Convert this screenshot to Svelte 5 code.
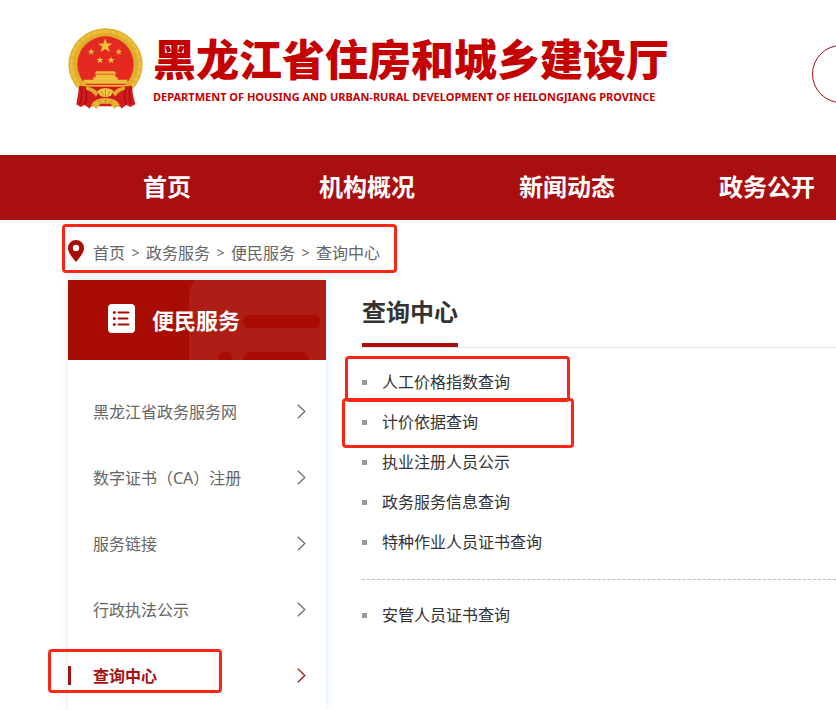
<script lang="ts">
	const navItems = ['首页', '机构概况', '新闻动态', '政务公开'];

	const crumbs = ['首页', '政务服务', '便民服务', '查询中心'];

	const sideItems = [
		{ id: 'portal', label: '黑龙江省政务服务网' },
		{ id: 'ca', label: '数字证书（CA）注册' },
		{ id: 'links', label: '服务链接' },
		{ id: 'law', label: '行政执法公示' },
		{ id: 'query', label: '查询中心' }
	];

	const groups = [
		[
			{ label: '人工价格指数查询', mark: 'mark-index' },
			{ label: '计价依据查询', mark: 'mark-basis' },
			{ label: '执业注册人员公示', mark: '' },
			{ label: '政务服务信息查询', mark: '' },
			{ label: '特种作业人员证书查询', mark: '' }
		],
		[{ label: '安管人员证书查询', mark: '' }]
	];

	let active = $state('query');
	let keyword = $state('');
</script>

{#snippet star(x: number, y: number, size: number)}
	<path
		transform="translate({x} {y}) scale({size})"
		d="M0-10 2.4-3.2 9.5-3.1 3.8 1.2 5.9 8.1 0 4-5.9 8.1-3.8 1.2-9.5-3.1-2.4-3.2Z"
	/>
{/snippet}

<div class="page">
	<!-- Header -->
	<header class="header">
		<a href="/" class="brand">
			<svg class="emblem" viewBox="54 38 226 244" aria-hidden="true">
				<ellipse cx="167" cy="148" rx="112" ry="109" fill="#e3b02c" />
				<ellipse cx="167" cy="148" rx="103" ry="100" fill="none" stroke="#ebc142" stroke-width="8" stroke-dasharray="14 5" />
				<ellipse cx="167" cy="148" rx="91" ry="89" fill="none" stroke="#dda92a" stroke-width="5" stroke-dasharray="5 7" />
				<circle cx="167" cy="148" r="85" fill="#e42a20" />
				<g fill="#efc03d">
					{@render star(166, 92, 2.3)}
					{@render star(124, 110, 1.1)}
					{@render star(207, 110, 1.1)}
					{@render star(150, 135, 1.1)}
					{@render star(184, 135, 1.1)}
					<path d="M140 168h54l6 8h-66zM137 178h60v10h-60zM130 186h74v8h-74zM101 194h132v12H101zM94 210h146v4H94z" />
				</g>
				<path d="M104 216H230L222 274H112Z" fill="#cf1b1c" />
				<path d="M88 211 112 214 134 236 120 281 104 270 92 276 79 268 84 240Z" fill="#d31b1e" />
				<path d="M246 211 222 214 200 236 214 281 230 270 242 276 257 268 250 240Z" fill="#d31b1e" />
				<path d="M92 216q8 26-3 52M106 218q8 26-1 50M242 216q-8 26 3 52M228 218q-8 26 1 50" fill="none" stroke="#a20e14" stroke-width="4" />
				<path d="M142 228Q167 210 192 228L182 243Q167 249 152 243Z" fill="#f2c945" />
				<path d="M108 214q24 2 38 20l-8 10q-14-18-30-20zM226 214q-24 2-38 20l8 10q14-18 30-20z" fill="#e0aa2b" />
				<path d="M124 270Q134 249 167 249T210 270L194 281 182 266H152L140 281Z" fill="#e5b32f" />
				<path d="M153 228l8 14M167 222v22M181 228l-8 14M145 254l8 10M167 251v14M189 254l-8 10" stroke="#c78b1b" stroke-width="3" />
			</svg>
			<span class="brand-text">
				<span class="brand-name">黑龙江省住房和城乡建设厅</span>
				<span class="brand-sub">DEPARTMENT OF HOUSING AND URBAN-RURAL DEVELOPMENT OF HEILONGJIANG PROVINCE</span>
			</span>
		</a>
		<input class="search" type="search" aria-label="搜索" bind:value={keyword} />
	</header>

	<nav class="nav">
		{#each navItems as item}
			<a href="/">{item}</a>
		{/each}
	</nav>

	<!-- Breadcrumb -->
	<div class="crumbs">
		<svg class="pin" viewBox="0 0 16 22" aria-hidden="true">
			<path fill="#a90c02" fill-rule="evenodd" d="M8 0a8 8 0 0 1 8 8c0 4.500-4 9-8 14C4 17 0 12.500 0 8a8 8 0 0 1 8-8Zm0 4.800a3.200 3.200 0 1 0 0 6.400 3.200 3.200 0 0 0 0-6.400Z" />
		</svg>
		{#each crumbs as crumb, i}
			{#if i > 0}
				<span class="sep">&gt;</span>
			{/if}
			<a href="/">{crumb}</a>
		{/each}
		<span class="mark mark-crumbs"></span>
	</div>

	<div class="body">
		<!-- Sidebar -->
		<aside class="sidebar">
			<div class="sidebar-head">
				<svg class="head-bg" viewBox="0 0 137 80" aria-hidden="true">
					<rect y="-8" width="170" height="130" rx="24" fill="#af1d17" />
					<g fill="#a90c02">
						<rect x="54" y="35" width="77" height="13" rx="6" />
						<rect x="54" y="72" width="66" height="14" rx="7" />
						<circle cx="36" cy="79" r="7" />
					</g>
				</svg>
				<svg class="head-icon" viewBox="0 0 27 29" aria-hidden="true">
					<rect width="27" height="29" rx="4" fill="#fff" />
					<path d="M10.500 8.500h10M10.500 14.500h9M10.500 20.500h10" stroke="#a90c02" stroke-width="2" stroke-linecap="round" />
					<g fill="#a90c02">
						<circle cx="6.300" cy="8.500" r="1.500" />
						<circle cx="6.300" cy="14.500" r="1.500" />
						<circle cx="6.300" cy="20.500" r="1.500" />
					</g>
				</svg>
				<h2>便民服务</h2>
			</div>
			<div class="side-list">
				{#each sideItems as item}
					<a
						href="#{item.id}"
						class="side-item"
						class:active={active === item.id}
						onclick={() => (active = item.id)}
					>
						<span>{item.label}</span>
						<svg class="arrow" viewBox="0 0 9 15" aria-hidden="true">
							<path d="M.8.8 7.800 7.500.8 14.200" fill="none" stroke="currentColor" stroke-width="1.200" />
						</svg>
						{#if item.id === 'query'}
							<span class="mark mark-side"></span>
						{/if}
					</a>
				{/each}
			</div>
		</aside>

		<!-- Content -->
		<main class="content">
			<div class="title-bar">
				<h1>查询中心</h1>
			</div>
			{#each groups as group}
				<ul class="list">
					{#each group as row}
						<li>
							<a href="/">{row.label}</a>
							{#if row.mark}
								<span class="mark {row.mark}"></span>
							{/if}
						</li>
					{/each}
				</ul>
			{/each}
		</main>
	</div>
</div>

<style>
	:global(body) {
		background: #fff;
	}

	.page {
		min-height: 100vh;
		display: flex;
		flex-direction: column;
		overflow: hidden;
		font-family: 'Noto Sans', 'Noto Sans CJK SC', sans-serif;
		font-size: 16px;
		color: #333;
	}

	a {
		color: inherit;
		text-decoration: none;
	}

	h1,
	h2 {
		margin: 0;
		font-size: 24px;
		font-weight: 700;
	}

	/* Header */
	.header {
		display: flex;
		align-items: flex-start;
		gap: 144px;
		padding: 28px 0 45px 68px;
	}

	.brand {
		display: flex;
		flex: none;
		gap: 10px;
		color: #c40000;
	}

	.emblem {
		width: 75px;
		height: 81px;
	}

	.brand-text {
		display: flex;
		flex-direction: column;
		width: 515px;
		padding-top: 8px;
		white-space: nowrap;
	}

	.brand-name {
		font-size: 43px;
		line-height: 48px;
		font-weight: 900;
	}

	.brand-sub {
		font-size: 11px;
		line-height: 26px;
		font-weight: 700;
	}

	.search {
		flex: 1 0 320px;
		box-sizing: border-box;
		height: 58px;
		margin: 17px 0 0;
		padding: 0 28px;
		border: 1px solid #a90f0f;
		border-radius: 29px;
		background: #fff;
		font: inherit;
		outline: none;
		appearance: none;
	}

	/* Nav */
	.nav {
		display: flex;
		padding-left: 67px;
		background: #a90f0f;
	}

	.nav a {
		flex: none;
		width: 200px;
		padding-bottom: 2px;
		line-height: 63px;
		text-align: center;
		font-size: 24px;
		font-weight: 700;
		color: #fff;
	}

	/* Breadcrumb */
	.crumbs {
		position: relative;
		align-self: flex-start;
		display: flex;
		align-items: center;
		height: 60px;
		margin-left: 68px;
		color: #666;
	}

	.crumbs a {
		line-height: 24px;
		padding-top: 5px;
	}

	.pin {
		width: 16px;
		height: 22px;
		margin: 2px 9px 0 0;
	}

	.sep {
		width: 21px;
		padding-top: 6px;
		text-align: center;
		font-size: 14px;
		line-height: 24px;
	}

	/* Red frames around highlighted entries */
	.mark {
		position: absolute;
		box-sizing: border-box;
		border: 3px solid #ff2515;
		border-radius: 4px;
		pointer-events: none;
	}

	.mark-crumbs {
		inset: 4px -17px 7px -6px;
	}

	.mark-side {
		inset: 7px 104px 15px -20px;
	}

	.mark-index {
		top: -6px;
		left: -17px;
		width: 225px;
		height: 46px;
	}

	.mark-basis {
		top: -4px;
		left: -20px;
		width: 232px;
		height: 50px;
	}

	/* Body */
	.body {
		flex: 1;
		display: flex;
		align-items: stretch;
		gap: 36px;
		padding-left: 68px;
	}

	.sidebar {
		flex: 0 0 258px;
		background: #fff;
		box-shadow: 0 0 8px #d3e8fa;
	}

	.sidebar-head {
		position: relative;
		display: flex;
		align-items: center;
		gap: 17px;
		box-sizing: border-box;
		height: 80px;
		padding: 0 40px 3px;
		background: #a90c02;
		color: #fff;
	}

	.head-bg {
		position: absolute;
		top: 0;
		right: 0;
		width: 137px;
		height: 80px;
	}

	.head-icon {
		width: 27px;
		height: 29px;
	}

	.sidebar-head h2 {
		position: relative;
		font-size: 22px;
	}

	.side-list {
		padding-top: 18px;
	}

	.side-item {
		position: relative;
		display: flex;
		align-items: center;
		justify-content: space-between;
		height: 66px;
		padding: 0 20px 0 25px;
		color: #666;
	}

	.side-item.active {
		color: #a90f0f;
		font-weight: 700;
	}

	.side-item.active::before {
		content: '';
		position: absolute;
		left: 0;
		width: 3px;
		height: 19px;
		background: #a90f0f;
	}

	.arrow {
		width: 9px;
		height: 15px;
	}

	/* Content */
	.content {
		flex: 1;
		min-width: 0;
	}

	.title-bar {
		display: flex;
		height: 67px;
		margin-bottom: 14px;
		border-bottom: 1px solid #e3e3e3;
	}

	.title-bar h1 {
		line-height: 63px;
		border-bottom: 4px solid #a90f0f;
	}

	.list {
		list-style: none;
		margin: 0;
		padding: 0;
	}

	.list + .list {
		margin-top: 17px;
		padding-top: 15px;
		border-top: 1px dashed #bbb;
	}

	.list li {
		position: relative;
		display: flex;
		align-items: center;
		gap: 15px;
		line-height: 40px;
	}

	.list li::before {
		content: '';
		width: 5px;
		height: 5px;
		background: #999;
	}
</style>
